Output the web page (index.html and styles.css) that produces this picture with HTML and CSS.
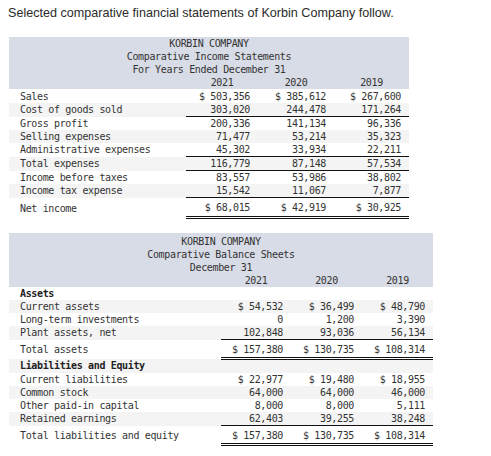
FILE: index.html
```html
<!DOCTYPE html>
<html>
<head>
<meta charset="utf-8">
<link rel="stylesheet" href="styles.css">
</head>
<body>
<p class="intro">Selected comparative financial statements of Korbin Company follow.</p>

<table class="fs income">
  <colgroup><col class="c-label"><col class="c1"><col class="c2"><col class="c3"></colgroup>
  <thead>
    <tr><th colspan="4">KORBIN COMPANY</th></tr>
    <tr><th colspan="4">Comparative Income Statements</th></tr>
    <tr><th colspan="4">For Years Ended December 31</th></tr>
    <tr class="years"><th></th><th>2021</th><th>2020</th><th>2019</th></tr>
  </thead>
  <tbody>
    <tr><td>Sales</td><td>$ 503,356</td><td>$ 385,612</td><td>$ 267,600</td></tr>
    <tr class="ul"><td>Cost of goods sold</td><td>303,020</td><td>244,478</td><td>171,264</td></tr>
    <tr><td>Gross profit</td><td>200,336</td><td>141,134</td><td>96,336</td></tr>
    <tr><td>Selling expenses</td><td>71,477</td><td>53,214</td><td>35,323</td></tr>
    <tr class="ul"><td>Administrative expenses</td><td>45,302</td><td>33,934</td><td>22,211</td></tr>
    <tr class="ul"><td>Total expenses</td><td>116,779</td><td>87,148</td><td>57,534</td></tr>
    <tr><td>Income before taxes</td><td>83,557</td><td>53,986</td><td>38,802</td></tr>
    <tr class="ul"><td>Income tax expense</td><td>15,542</td><td>11,067</td><td>7,877</td></tr>
    <tr class="dbl"><td>Net income</td><td>$ 68,015</td><td>$ 42,919</td><td>$ 30,925</td></tr>
  </tbody>
</table>

<table class="fs balance">
  <colgroup><col class="c-label"><col class="c1"><col class="c2"><col class="c3"></colgroup>
  <thead>
    <tr><th colspan="4">KORBIN COMPANY</th></tr>
    <tr><th colspan="4">Comparative Balance Sheets</th></tr>
    <tr><th colspan="4">December 31</th></tr>
    <tr class="years"><th></th><th>2021</th><th>2020</th><th>2019</th></tr>
  </thead>
  <tbody>
    <tr class="sec"><td>Assets</td><td></td><td></td><td></td></tr>
    <tr><td>Current assets</td><td>$ 54,532</td><td>$ 36,499</td><td>$ 48,790</td></tr>
    <tr><td>Long-term investments</td><td>0</td><td>1,200</td><td>3,390</td></tr>
    <tr class="ul"><td>Plant assets, net</td><td>102,848</td><td>93,036</td><td>56,134</td></tr>
    <tr class="dbl"><td>Total assets</td><td>$ 157,380</td><td>$ 130,735</td><td>$ 108,314</td></tr>
    <tr class="sec"><td>Liabilities and Equity</td><td></td><td></td><td></td></tr>
    <tr><td>Current liabilities</td><td>$ 22,977</td><td>$ 19,480</td><td>$ 18,955</td></tr>
    <tr><td>Common stock</td><td>64,000</td><td>64,000</td><td>46,000</td></tr>
    <tr><td>Other paid-in capital</td><td>8,000</td><td>8,000</td><td>5,111</td></tr>
    <tr class="ul"><td>Retained earnings</td><td>62,403</td><td>39,255</td><td>38,248</td></tr>
    <tr class="dbl"><td>Total liabilities and equity</td><td>$ 157,380</td><td>$ 130,735</td><td>$ 108,314</td></tr>
  </tbody>
</table>
</body>
</html>
```

FILE: styles.css
```css
body {
  margin: 0;
  padding: 0 9px;
  background: #fff;
  color: #333;
}

.intro {
  margin: 0 0 0 -1px;
  padding: 6px 0 0 0;
  height: 31px;
  box-sizing: border-box;
  font-family: "Liberation Sans", Arial, sans-serif;
  font-size: 12.6px;
  color: #2b2b2b;
}

.fs {
  border-collapse: collapse;
  font-family: "DejaVu Sans Mono", monospace;
  font-size: 10px;
  letter-spacing: -0.35px;
  color: #333;
}

.fs th, .fs td {
  padding: 0;
  white-space: nowrap;
}

.fs thead tr {
  background: #d8dce6;
}

.fs thead th {
  font-weight: normal;
  text-align: center;
  height: 13px;
  line-height: 13px;
}

.fs tbody tr:nth-child(even) {
  background: #f4f4f4;
}

.fs tbody td {
  height: 13px;
  line-height: 13px;
  text-align: right;
  padding-right: 8px;
}

.fs tbody td:first-child {
  text-align: left;
  padding-left: 11px;
  padding-right: 0;
}

.fs tbody tr.ul td + td {
  border-bottom: 1px solid #111;
}

.fs tbody tr.dbl td + td {
  border-bottom: 3px double #111;
}

.fs tbody tr.dbl td {
  height: 17px;
  padding-top: 1px;
}

.fs tbody tr.sec td {
  font-weight: bold;
  color: #222;
}

/* Income statement */
.income {
  width: 400px;
  margin-top: 6px;
}
.income .c-label { width: 177px; }
.income .c1 { width: 72px; }
.income .c2 { width: 76px; }
.income .c3 { width: 75px; }

.income tbody tr:first-child td {
  padding-top: 1px;
}

/* Balance sheet */
.balance {
  width: 424px;
  margin-top: 14px;
}
.balance .c-label { width: 212px; }
.balance .c1 { width: 70px; }
.balance .c2 { width: 71px; }
.balance .c3 { width: 71px; }

.balance thead tr:first-child th {
  padding-top: 2px;
}

.balance tbody tr.dbl td {
  height: 16px;
}
```
